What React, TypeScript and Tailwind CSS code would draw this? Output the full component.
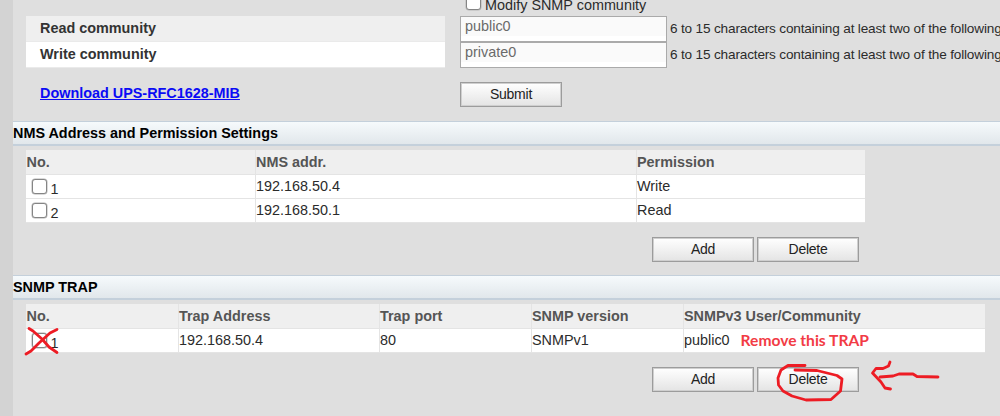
import type { ReactNode } from "react";

const HINT = "6 to 15 characters containing at least two of the following";

const nmsRows = [
  { no: 1, addr: "192.168.50.4", permission: "Write" },
  { no: 2, addr: "192.168.50.1", permission: "Read" },
];

function Checkbox() {
  return (
    <span className="inline-block size-[15px] shrink-0 rounded-[3px] border-[1.5px] border-[#858585] bg-white shadow-[0_0_0_0.5px_#b5b5b5]" />
  );
}

function Button({ children }: { children: ReactNode }) {
  return (
    <button
      type="button"
      className="h-[25px] w-[102px] border border-[#9c9c9c] bg-linear-to-b from-white to-[#e4e4e4] text-[14px] leading-[23px] tracking-[-0.25px] text-[#222] shadow-[inset_0_0_0_1px_#cfcfcf]"
    >
      {children}
    </button>
  );
}

function SectionTitle({ children }: { children: ReactNode }) {
  return (
    <h2 className="h-[25px] border-t border-b-2 border-[#c4d0db] bg-linear-to-b from-[#f6fafc] to-[#e1e7eb] text-[14.4px] leading-[22px] font-bold whitespace-nowrap text-black">
      {children}
    </h2>
  );
}

function CommunityRow({ label, value, shade }: { label: string; value: string; shade: string }) {
  return (
    <div className="flex h-[26px]">
      <div
        className={`w-[419px] shrink-0 border-b border-[#eaeaea] pl-[14px] text-[14.4px] leading-[25px] font-bold text-[#333] ${shade}`}
      >
        {label}
      </div>
      <div className="ml-[15px] h-[26px] w-[207px] shrink-0 border border-[#aaa] bg-white">
        <div className="h-[19px] bg-[#fafafa] pl-1 text-[14.4px] leading-[18px] text-[#6a6a6a]">{value}</div>
      </div>
      <span className="ml-[3px] text-[13.6px] leading-[25px] tracking-[-0.17px] whitespace-nowrap text-[#2b2b2b]">
        {HINT}
      </span>
    </div>
  );
}

export default function App() {
  return (
    <div className="relative h-[416px] w-[1000px] overflow-hidden bg-[#d3d3d3] pl-[13px] font-['Liberation_Sans',Arial,sans-serif] text-[14.4px]">
      <div className="h-full w-[987px] bg-[#dfdfdf] text-[#2b2b2b]">
        <div className="h-[121px] pl-[13px]">
          <div className="flex h-4 items-start pl-[440px]">
            <span className="-mt-[5px] flex">
              <Checkbox />
            </span>
            <span className="-mt-[4px] ml-1 leading-[19px]">Modify SNMP community</span>
          </div>
          <CommunityRow label="Read community" value="public0" shade="bg-[#efefef]" />
          <CommunityRow label="Write community" value="private0" shade="bg-white" />
          <div className="mt-[14px] flex">
            <a className="w-[420px] pl-[14px] leading-[23px] font-bold text-[#0b0bf5] underline">
              Download UPS-RFC1628-MIB
            </a>
            <div className="ml-[14px]">
              <Button>Submit</Button>
            </div>
          </div>
        </div>

        <SectionTitle>NMS Address and Permission Settings</SectionTitle>
        <div className="h-[129px] pt-1 pl-[13px]">
          <div className="w-[839px] bg-white">
            <div className="grid h-[25px] grid-cols-[229px_381px_229px] border-b border-[#e4e4e4] bg-[#efefef] leading-[24px] font-bold text-[#555]">
              <span className="pl-[0.5px]">No.</span>
              <span className="border-l border-[#e4e4e4]">NMS addr.</span>
              <span className="border-l border-[#e4e4e4]">Permission</span>
            </div>
            {nmsRows.map((row) => (
              <div
                key={row.no}
                className="grid h-6 grid-cols-[229px_381px_229px] border-b border-[#e4e4e4] leading-[22px]"
              >
                <span className="flex pt-[4px] pl-[6px]">
                  <Checkbox />
                  <span className="ml-[3.5px] leading-[20px]">{row.no}</span>
                </span>
                <span className="border-l border-[#e4e4e4]">{row.addr}</span>
                <span className="border-l border-[#e4e4e4]">{row.permission}</span>
              </div>
            ))}
          </div>
          <div className="mt-[14px] flex gap-[3px] pl-[626px]">
            <Button>Add</Button>
            <Button>Delete</Button>
          </div>
        </div>

        <SectionTitle>SNMP TRAP</SectionTitle>
        <div className="pt-1 pl-[13px]">
          <div className="w-[959px] bg-white">
            <div className="grid h-[25px] grid-cols-[152px_201px_152px_152px_302px] border-b border-[#e4e4e4] bg-[#efefef] leading-[24px] font-bold text-[#555]">
              <span className="pl-[0.5px]">No.</span>
              <span className="border-l border-[#e4e4e4]">Trap Address</span>
              <span className="border-l border-[#e4e4e4]">Trap port</span>
              <span className="border-l border-[#e4e4e4]">SNMP version</span>
              <span className="border-l border-[#e4e4e4]">SNMPv3 User/Community</span>
            </div>
            <div className="grid h-6 grid-cols-[152px_201px_152px_152px_302px] border-b border-[#e4e4e4] leading-[22px]">
              <span className="flex pt-[4px] pl-[6px]">
                <Checkbox />
                <span className="ml-[3.5px] leading-[20px]">1</span>
              </span>
              <span className="border-l border-[#e4e4e4]">192.168.50.4</span>
              <span className="border-l border-[#e4e4e4]">80</span>
              <span className="border-l border-[#e4e4e4]">SNMPv1</span>
              <span className="flex border-l border-[#e4e4e4]">
                public0
                <span className="ml-[11px] font-[Lato,'Open_Sans',sans-serif] text-[15.6px] font-bold whitespace-nowrap text-[#f23b45]">
                  Remove this TRAP
                </span>
              </span>
            </div>
          </div>
          <div className="mt-[14px] flex gap-[3px] pl-[626px]">
            <Button>Add</Button>
            <Button>Delete</Button>
          </div>
        </div>
      </div>

      {/* Hand-drawn markup over the trap table */}
      <svg
        className="pointer-events-none absolute inset-0"
        width="1000"
        height="416"
        fill="none"
        stroke="#ed1c24"
        strokeWidth="2.8"
        strokeLinecap="round"
        strokeLinejoin="round"
      >
        <path d="M29 328.5 L33 331 L42 339 L49 347 L57 352.5" />
        <path d="M57 329.5 L50 333 L39 343 L31 351 L26 354" />
        <path d="M805 365.5 L788 365.5 L781 370 L778 378 L778.5 385 L783 391 L792 396 L806 400 L831 399.5 L840.5 391 L842 379 L837 375.5 L827 373 L817 370.5 L795 370" />
        <path d="M890 362 L888.5 366 L883 368.5 L876 368.5 L872.5 373 L881 382 L885 388 L890.5 389" />
        <path d="M880 377 L893 376 L899 374 L913 374 L917 376.5 L938 377" />
      </svg>
    </div>
  );
}
